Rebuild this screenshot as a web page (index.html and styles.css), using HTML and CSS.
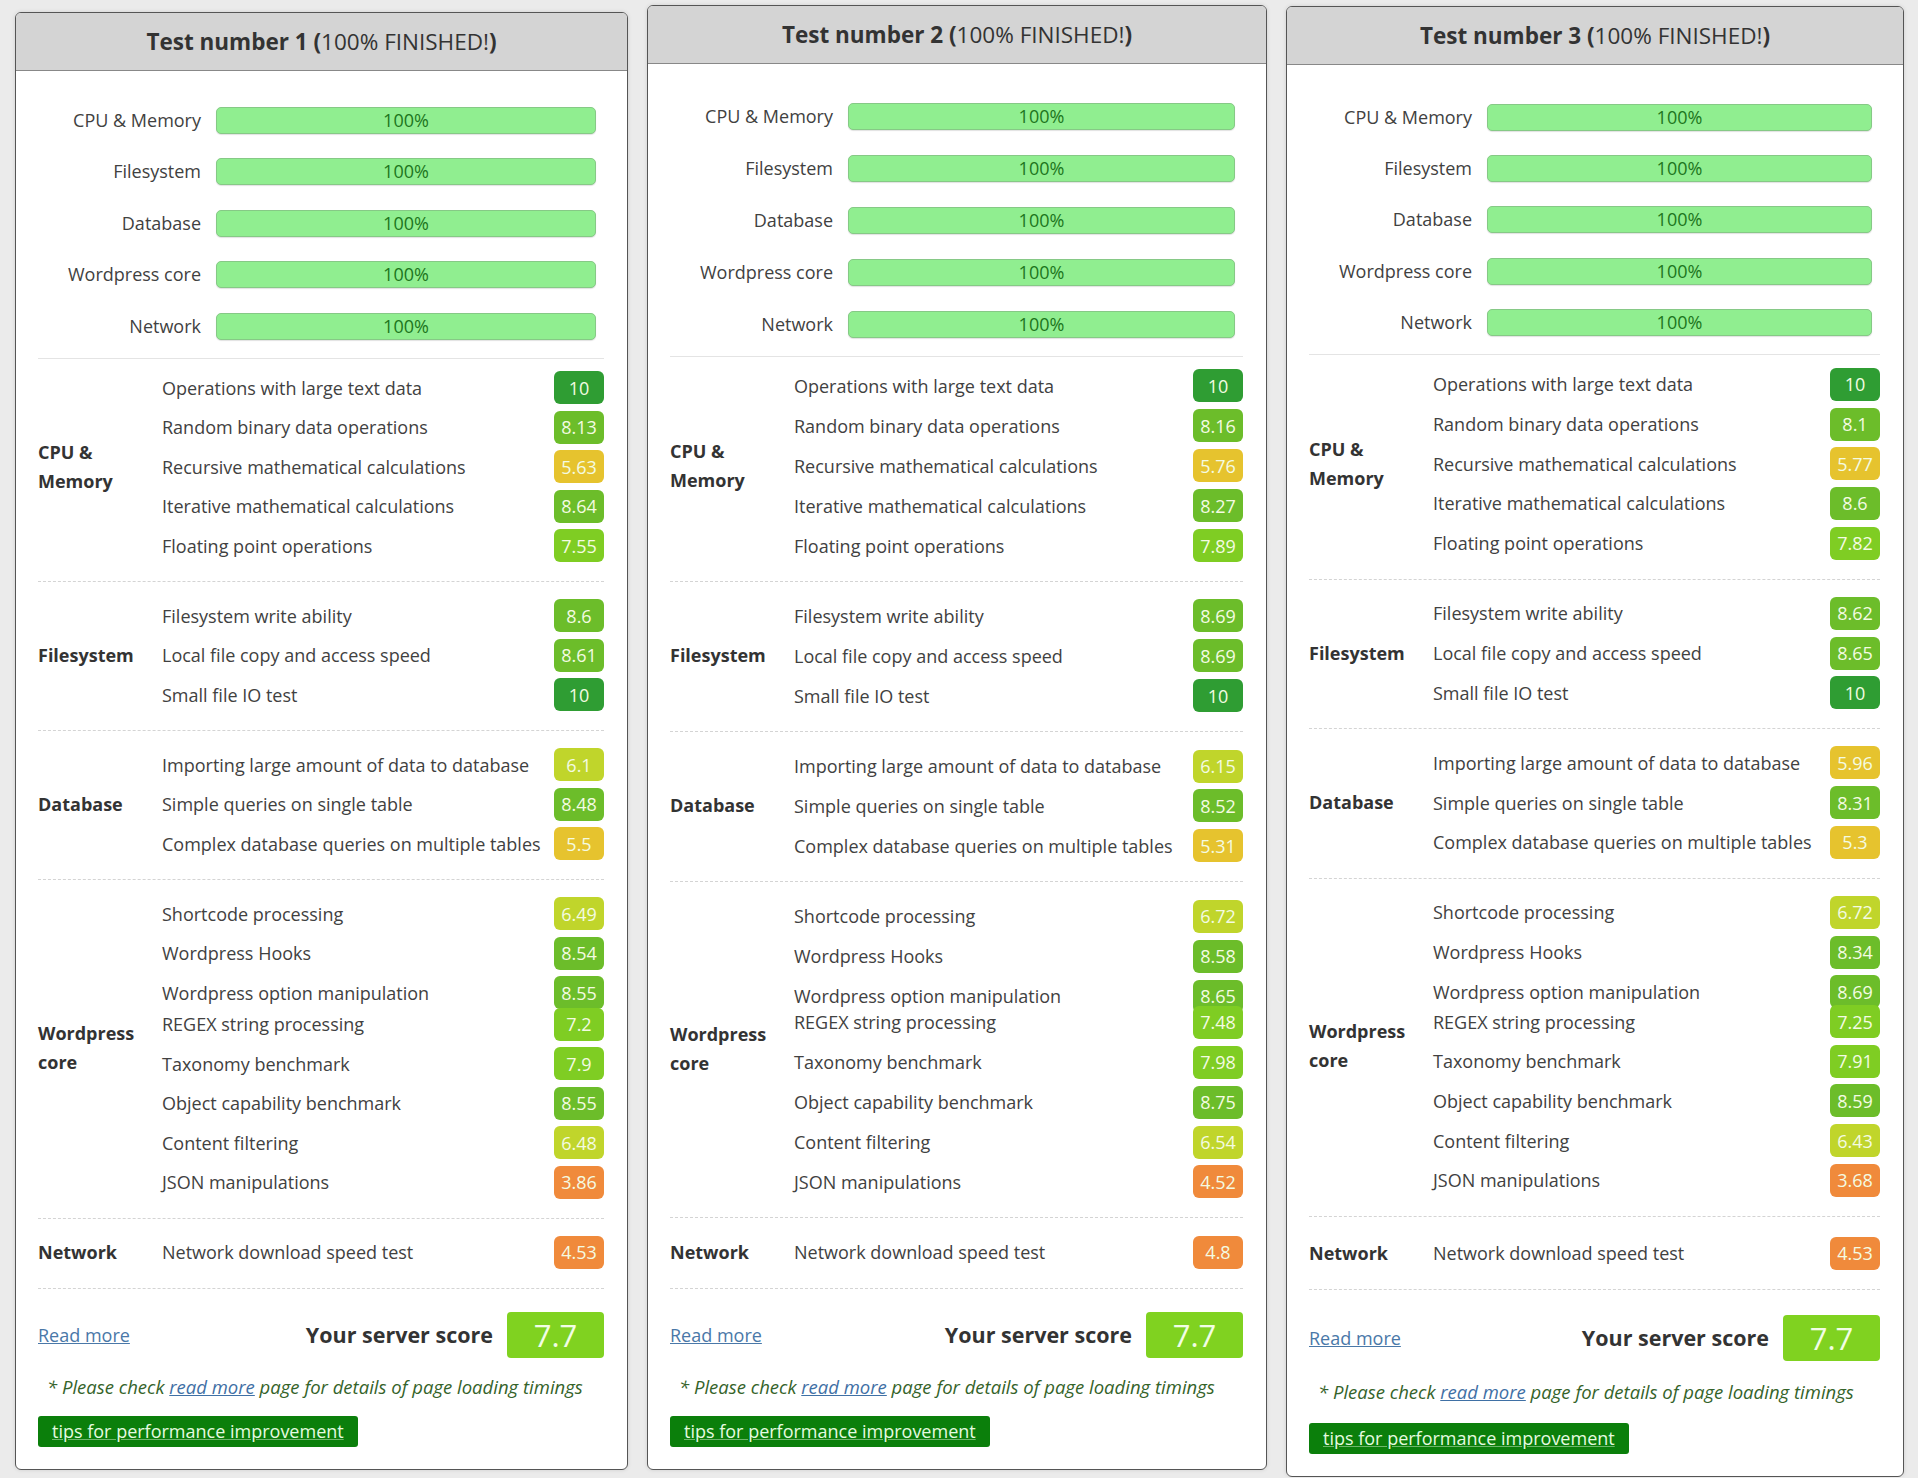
FILE: index.html
```html
<!DOCTYPE html>
<html>
<head>
    <title>Server benchmark results</title>
    <link rel="stylesheet" href="styles.css">
</head>
<body>
<div class="tests">

    <!-- Test 1 -->
    <div class="test first">
        <div class="test-head"><b>Test number 1 (</b>100% FINISHED!<b>)</b></div>
        <div class="test-body">
            <div class="progress">
                <div class="progress-label">CPU &amp; Memory</div><div class="bar">100%</div>
                <div class="progress-label">Filesystem</div><div class="bar">100%</div>
                <div class="progress-label">Database</div><div class="bar">100%</div>
                <div class="progress-label">Wordpress core</div><div class="bar">100%</div>
                <div class="progress-label">Network</div><div class="bar">100%</div>
            </div>
            <div class="groups">
                <div class="group">
                    <div class="group-name">CPU &amp; Memory</div>
                    <div class="group-rows">
                        <div class="row"><span>Operations with large text data</span><span class="badge s10">10</span></div>
                        <div class="row"><span>Random binary data operations</span><span class="badge s8">8.13</span></div>
                        <div class="row"><span>Recursive mathematical calculations</span><span class="badge s5">5.63</span></div>
                        <div class="row"><span>Iterative mathematical calculations</span><span class="badge s8">8.64</span></div>
                        <div class="row"><span>Floating point operations</span><span class="badge s7">7.55</span></div>
                    </div>
                </div>
                <div class="group">
                    <div class="group-name">Filesystem</div>
                    <div class="group-rows">
                        <div class="row"><span>Filesystem write ability</span><span class="badge s8">8.6</span></div>
                        <div class="row"><span>Local file copy and access speed</span><span class="badge s8">8.61</span></div>
                        <div class="row"><span>Small file IO test</span><span class="badge s10">10</span></div>
                    </div>
                </div>
                <div class="group">
                    <div class="group-name">Database</div>
                    <div class="group-rows">
                        <div class="row"><span>Importing large amount of data to database</span><span class="badge s6">6.1</span></div>
                        <div class="row"><span>Simple queries on single table</span><span class="badge s8">8.48</span></div>
                        <div class="row"><span>Complex database queries on multiple tables</span><span class="badge s5">5.5</span></div>
                    </div>
                </div>
                <div class="group">
                    <div class="group-name">Wordpress core</div>
                    <div class="group-rows">
                        <div class="row"><span>Shortcode processing</span><span class="badge s6">6.49</span></div>
                        <div class="row"><span>Wordpress Hooks</span><span class="badge s8">8.54</span></div>
                        <div class="row"><span>Wordpress option manipulation</span><span class="badge s8">8.55</span></div>
                        <div class="row seam"><span>REGEX string processing</span><span class="badge s7">7.2</span></div>
                        <div class="row"><span>Taxonomy benchmark</span><span class="badge s7">7.9</span></div>
                        <div class="row"><span>Object capability benchmark</span><span class="badge s8">8.55</span></div>
                        <div class="row"><span>Content filtering</span><span class="badge s6">6.48</span></div>
                        <div class="row"><span>JSON manipulations</span><span class="badge s4">3.86</span></div>
                    </div>
                </div>
                <div class="group">
                    <div class="group-name">Network</div>
                    <div class="group-rows">
                        <div class="row"><span>Network download speed test</span><span class="badge s4">4.53</span></div>
                    </div>
                </div>
            </div>
            <div class="score-row">
                <a href="#" class="read-more">Read more</a>
                <span class="score-label">Your server score</span>
                <span class="score">7.7</span>
            </div>
            <p class="note">* Please check <a href="#">read more</a> page for details of page loading timings</p>
            <a href="#" class="tips">tips for performance improvement</a>
        </div>
    </div>

    <!-- Test 2 -->
    <div class="test second">
        <div class="test-head"><b>Test number 2 (</b>100% FINISHED!<b>)</b></div>
        <div class="test-body">
            <div class="progress">
                <div class="progress-label">CPU &amp; Memory</div><div class="bar">100%</div>
                <div class="progress-label">Filesystem</div><div class="bar">100%</div>
                <div class="progress-label">Database</div><div class="bar">100%</div>
                <div class="progress-label">Wordpress core</div><div class="bar">100%</div>
                <div class="progress-label">Network</div><div class="bar">100%</div>
            </div>
            <div class="groups">
                <div class="group">
                    <div class="group-name">CPU &amp; Memory</div>
                    <div class="group-rows">
                        <div class="row"><span>Operations with large text data</span><span class="badge s10">10</span></div>
                        <div class="row"><span>Random binary data operations</span><span class="badge s8">8.16</span></div>
                        <div class="row"><span>Recursive mathematical calculations</span><span class="badge s5">5.76</span></div>
                        <div class="row"><span>Iterative mathematical calculations</span><span class="badge s8">8.27</span></div>
                        <div class="row"><span>Floating point operations</span><span class="badge s7">7.89</span></div>
                    </div>
                </div>
                <div class="group">
                    <div class="group-name">Filesystem</div>
                    <div class="group-rows">
                        <div class="row"><span>Filesystem write ability</span><span class="badge s8">8.69</span></div>
                        <div class="row"><span>Local file copy and access speed</span><span class="badge s8">8.69</span></div>
                        <div class="row"><span>Small file IO test</span><span class="badge s10">10</span></div>
                    </div>
                </div>
                <div class="group">
                    <div class="group-name">Database</div>
                    <div class="group-rows">
                        <div class="row"><span>Importing large amount of data to database</span><span class="badge s6">6.15</span></div>
                        <div class="row"><span>Simple queries on single table</span><span class="badge s8">8.52</span></div>
                        <div class="row"><span>Complex database queries on multiple tables</span><span class="badge s5">5.31</span></div>
                    </div>
                </div>
                <div class="group">
                    <div class="group-name">Wordpress core</div>
                    <div class="group-rows">
                        <div class="row"><span>Shortcode processing</span><span class="badge s6">6.72</span></div>
                        <div class="row"><span>Wordpress Hooks</span><span class="badge s8">8.58</span></div>
                        <div class="row"><span>Wordpress option manipulation</span><span class="badge s8">8.65</span></div>
                        <div class="row seam"><span>REGEX string processing</span><span class="badge s7">7.48</span></div>
                        <div class="row"><span>Taxonomy benchmark</span><span class="badge s7">7.98</span></div>
                        <div class="row"><span>Object capability benchmark</span><span class="badge s8">8.75</span></div>
                        <div class="row"><span>Content filtering</span><span class="badge s6">6.54</span></div>
                        <div class="row"><span>JSON manipulations</span><span class="badge s4">4.52</span></div>
                    </div>
                </div>
                <div class="group">
                    <div class="group-name">Network</div>
                    <div class="group-rows">
                        <div class="row"><span>Network download speed test</span><span class="badge s4">4.8</span></div>
                    </div>
                </div>
            </div>
            <div class="score-row">
                <a href="#" class="read-more">Read more</a>
                <span class="score-label">Your server score</span>
                <span class="score">7.7</span>
            </div>
            <p class="note">* Please check <a href="#">read more</a> page for details of page loading timings</p>
            <a href="#" class="tips">tips for performance improvement</a>
        </div>
    </div>

    <!-- Test 3 -->
    <div class="test third">
        <div class="test-head"><b>Test number 3 (</b>100% FINISHED!<b>)</b></div>
        <div class="test-body">
            <div class="progress">
                <div class="progress-label">CPU &amp; Memory</div><div class="bar">100%</div>
                <div class="progress-label">Filesystem</div><div class="bar">100%</div>
                <div class="progress-label">Database</div><div class="bar">100%</div>
                <div class="progress-label">Wordpress core</div><div class="bar">100%</div>
                <div class="progress-label">Network</div><div class="bar">100%</div>
            </div>
            <div class="groups">
                <div class="group">
                    <div class="group-name">CPU &amp; Memory</div>
                    <div class="group-rows">
                        <div class="row"><span>Operations with large text data</span><span class="badge s10">10</span></div>
                        <div class="row"><span>Random binary data operations</span><span class="badge s8">8.1</span></div>
                        <div class="row"><span>Recursive mathematical calculations</span><span class="badge s5">5.77</span></div>
                        <div class="row"><span>Iterative mathematical calculations</span><span class="badge s8">8.6</span></div>
                        <div class="row"><span>Floating point operations</span><span class="badge s7">7.82</span></div>
                    </div>
                </div>
                <div class="group">
                    <div class="group-name">Filesystem</div>
                    <div class="group-rows">
                        <div class="row"><span>Filesystem write ability</span><span class="badge s8">8.62</span></div>
                        <div class="row"><span>Local file copy and access speed</span><span class="badge s8">8.65</span></div>
                        <div class="row"><span>Small file IO test</span><span class="badge s10">10</span></div>
                    </div>
                </div>
                <div class="group">
                    <div class="group-name">Database</div>
                    <div class="group-rows">
                        <div class="row"><span>Importing large amount of data to database</span><span class="badge s5">5.96</span></div>
                        <div class="row"><span>Simple queries on single table</span><span class="badge s8">8.31</span></div>
                        <div class="row"><span>Complex database queries on multiple tables</span><span class="badge s5">5.3</span></div>
                    </div>
                </div>
                <div class="group">
                    <div class="group-name">Wordpress core</div>
                    <div class="group-rows">
                        <div class="row"><span>Shortcode processing</span><span class="badge s6">6.72</span></div>
                        <div class="row"><span>Wordpress Hooks</span><span class="badge s8">8.34</span></div>
                        <div class="row"><span>Wordpress option manipulation</span><span class="badge s8">8.69</span></div>
                        <div class="row seam"><span>REGEX string processing</span><span class="badge s7">7.25</span></div>
                        <div class="row"><span>Taxonomy benchmark</span><span class="badge s7">7.91</span></div>
                        <div class="row"><span>Object capability benchmark</span><span class="badge s8">8.59</span></div>
                        <div class="row"><span>Content filtering</span><span class="badge s6">6.43</span></div>
                        <div class="row"><span>JSON manipulations</span><span class="badge s4">3.68</span></div>
                    </div>
                </div>
                <div class="group">
                    <div class="group-name">Network</div>
                    <div class="group-rows">
                        <div class="row"><span>Network download speed test</span><span class="badge s4">4.53</span></div>
                    </div>
                </div>
            </div>
            <div class="score-row">
                <a href="#" class="read-more">Read more</a>
                <span class="score-label">Your server score</span>
                <span class="score">7.7</span>
            </div>
            <p class="note">* Please check <a href="#">read more</a> page for details of page loading timings</p>
            <a href="#" class="tips">tips for performance improvement</a>
        </div>
    </div>

</div>
</body>
</html>
```

FILE: styles.css
```css
body {
    margin: 0;
    background: #ebebeb;
    font-family: "Open Sans", "Noto Sans", sans-serif;
    font-size: 18px;
    color: #414141;
}
.tests {
    display: grid;
    grid-template-columns: 613px 620px 618px;
    column-gap: 19px;
    align-items: start;
    padding: 5px 15px 0 15px;
}
.test {
    --row-h: 39.5px;
    --seam: -8px;
    --bars-top: 36px;
    --bars-gap: 24.4px;
    --score-top: 23px;
    --foot-gap: 17px;
    background: #fff;
    border: 1px solid #555;
    border-radius: 6px;
    overflow: hidden;
    box-shadow: 0 0 4px rgba(0, 0, 0, 0.12);
}
.test.first {
    margin-top: 7px;
}
.test.second {
    --row-h: 39.9px;
    --seam: -13.5px;
    --bars-top: 38.5px;
    --bars-gap: 25px;
}
.test.third {
    --row-h: 39.7px;
    --seam: -10px;
    --bars-top: 38.5px;
    --score-top: 25px;
    --foot-gap: 19px;
    margin-top: 1px;
}
.test.third .group:last-child {
    padding-top: 17px;
}
.test-head {
    height: 57px;
    background: #d4d4d4;
    border-bottom: 1px solid #888;
    display: flex;
    align-items: center;
    justify-content: center;
    font-size: 22.5px;
    color: #333;
}
.test-head b {
    white-space: pre;
}
.test-body {
    padding: 0 23px 22px 22px;
}

/* progress bars at the top */
.progress {
    display: grid;
    grid-template-columns: 163px 1fr;
    column-gap: 15px;
    row-gap: var(--bars-gap);
    padding: var(--bars-top) 8px 18px 0;
}
.progress-label {
    text-align: right;
    line-height: 27px;
    white-space: nowrap;
}
.bar {
    height: 27px;
    box-sizing: border-box;
    background: #90ee90;
    border: 1px solid #86c986;
    border-radius: 5px;
    text-align: center;
    line-height: 25px;
    color: #1d761d;
    box-shadow: 0 1px 1px rgba(0, 0, 0, 0.12);
}

/* benchmark groups */
.groups {
    border-top: 1px solid #e4e4e4;
}
.group {
    display: grid;
    grid-template-columns: 124px 1fr;
    align-items: center;
    padding: 14px 0 15.5px 0;
    border-bottom: 1px dashed #d4d4d4;
}
.group:first-child {
    padding-top: 9.5px;
}
.group-name {
    font-weight: bold;
    color: #333;
    line-height: 29px;
    padding-right: 14px;
}
.row {
    height: var(--row-h);
    display: flex;
    align-items: center;
    justify-content: space-between;
    white-space: nowrap;
}
.row.seam {
    margin-top: var(--seam);
}
.badge {
    width: 50px;
    height: 33px;
    border-radius: 6px;
    display: flex;
    align-items: center;
    justify-content: center;
    color: #f4fbe2;
}
.s10 { background: #2f9d33; }
.s8 { background: #6cbd2a; }
.s7 { background: #7fcd23; }
.s6 { background: #c0d52b; }
.s5 { background: #e6c32e; }
.s4 { background: #f08a3b; }

/* score and footer */
.score-row {
    display: flex;
    align-items: center;
    padding-top: var(--score-top);
}
.read-more {
    color: #4a78a8;
}
.score-label {
    margin-left: auto;
    margin-right: 14px;
    font-size: 21.5px;
    font-weight: bold;
    color: #333;
}
.score {
    width: 97px;
    height: 46px;
    border-radius: 4px;
    background: #80d220;
    color: #f2fde5;
    font-size: 31px;
    display: flex;
    align-items: center;
    justify-content: center;
}
.note {
    margin: var(--foot-gap) 0;
    padding-left: 9px;
    font-style: italic;
    font-size: 18.5px;
    line-height: 24px;
    color: #35632a;
    white-space: nowrap;
}
.note a {
    color: #3f70a5;
}
.tips {
    display: inline-block;
    height: 31px;
    line-height: 31px;
    padding: 0 14px;
    border-radius: 3px;
    background: #0b7f0b;
    color: #e6fbe0;
    text-decoration: underline;
    text-decoration-color: rgba(230, 251, 224, 0.45);
}
```
